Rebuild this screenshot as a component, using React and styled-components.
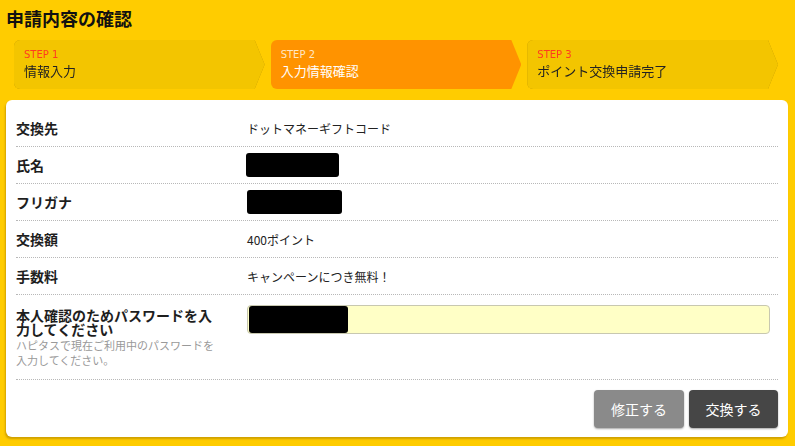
import React from "react";
import styled, { createGlobalStyle } from "styled-components";

const Global = createGlobalStyle`
  html, body { margin: 0; padding: 0; background: #ffcc00; }
  body { font-family: "Noto Sans CJK JP", "Noto Sans", sans-serif; color: #222; }
`;

const Page = styled.div`
  width: 795px;
  height: 446px;
  background: #ffcc00;
  box-sizing: border-box;
  padding: 5px 7px 0 6px;
  overflow: hidden;
`;

const Title = styled.h1`
  margin: 0;
  font-size: 18px;
  font-weight: 700;
  line-height: 26px;
  color: #111;
`;

const Steps = styled.div`
  display: grid;
  grid-template-columns: repeat(3, 1fr);
  column-gap: 6px;
  margin: 9px 10px 0 8px;
  height: 49px;
`;

const StepWrap = styled.div`
  filter: ${(p) => (p.$active ? "none" : "drop-shadow(0 0 0.6px rgba(120, 90, 0, 0.55))")};
`;

const Step = styled.div`
  height: 49px;
  box-sizing: border-box;
  padding: 8px 0 0 10px;
  border-radius: 6px;
  background: ${(p) => (p.$active ? "#ff9300" : "#f3c500")};
  clip-path: polygon(0 0, calc(100% - 10px) 0, 100% 50%, calc(100% - 10px) 100%, 0 100%);
  color: ${(p) => (p.$active ? "#fff" : "#222")};
`;

const StepNo = styled.div`
  font-family: "DejaVu Sans", "Noto Sans", sans-serif;
  font-size: 10px;
  line-height: 13px;
  color: ${(p) => (p.$active ? "#ffe7c4" : "#ff3b1f")};
`;

const StepName = styled.div`
  font-size: 13px;
  line-height: 19px;
`;

const Card = styled.div`
  margin-top: 11px;
  background: #fff;
  border-radius: 6px;
  box-shadow: -1px 2px 2px rgba(120, 80, 0, 0.35);
  padding: 10px 10px 9px 10px;
`;

const Row = styled.div`
  display: grid;
  grid-template-columns: 231px 1fr;
  align-items: ${(p) => (p.$top ? "start" : "center")};
  min-height: 37px;
  border-bottom: 1px dotted #b8b8b8;
  box-sizing: border-box;
  padding: ${(p) => (p.$top ? "10px 0 11px" : "0")};
`;

const Label = styled.div`
  font-size: 14px;
  font-weight: 700;
  color: #1e1e1e;
  line-height: ${(p) => (p.$tight ? "14px" : "20px")};
`;

const LabelBlock = styled.div`
  width: 203px;
  padding-top: 3px;
`;

const Hint = styled.div`
  font-size: 11px;
  line-height: 15px;
  color: #999;
  margin-top: 2px;
`;

const Value = styled.div`
  font-size: 12px;
  color: #222;
`;

const Redact = styled.div`
  width: ${(p) => p.$w}px;
  height: 24px;
  background: #000;
  border-radius: 3px;
  margin-left: ${(p) => p.$ml || 0}px;
`;

const Input = styled.div`
  height: 29px;
  box-sizing: border-box;
  border: 1px solid #c8c8b0;
  border-radius: 4px;
  background: #ffffc6;
  width: 523px;
  display: flex;
  align-items: center;
  padding-left: 1px;
`;

const PassMask = styled.div`
  width: 99px;
  height: 27px;
  background: #000;
  border-radius: 3px;
`;

const Actions = styled.div`
  display: flex;
  justify-content: flex-end;
  gap: 5px;
  padding-top: 10px;
`;

const Button = styled.button`
  width: ${(p) => p.$w}px;
  height: 38px;
  border: none;
  border-radius: 4px;
  background: ${(p) => (p.$primary ? "#464646" : "#8a8a8a")};
  color: #fff;
  font-family: "Noto Sans CJK JP", sans-serif;
  font-size: 14px;
  box-shadow: 0 1px 2px rgba(0, 0, 0, 0.35);
  padding: 0;
`;

const rows = [
  { label: "交換先", value: "ドットマネーギフトコード" },
  { label: "氏名", mask: 93, ml: -1 },
  { label: "フリガナ", mask: 95 },
  { label: "交換額", value: "400ポイント" },
  { label: "手数料", value: "キャンペーンにつき無料！" },
];

export default function App() {
  return (
    <>
      <Global />
      <Page>
        <Title>申請内容の確認</Title>
        <Steps>
          <StepWrap>
            <Step>
              <StepNo>STEP 1</StepNo>
              <StepName>情報入力</StepName>
            </Step>
          </StepWrap>
          <StepWrap $active>
            <Step $active>
              <StepNo $active>STEP 2</StepNo>
              <StepName>入力情報確認</StepName>
            </Step>
          </StepWrap>
          <StepWrap>
            <Step>
              <StepNo>STEP 3</StepNo>
              <StepName>ポイント交換申請完了</StepName>
            </Step>
          </StepWrap>
        </Steps>
        <Card>
          {rows.map((r) => (
            <Row key={r.label}>
              <Label>{r.label}</Label>
              {r.mask ? <Redact $w={r.mask} $ml={r.ml} /> : <Value>{r.value}</Value>}
            </Row>
          ))}
          <Row $top>
            <LabelBlock>
              <Label $tight>本人確認のためパスワードを入力してください</Label>
              <Hint>ハピタスで現在ご利用中のパスワードを入力してください。</Hint>
            </LabelBlock>
            <Input>
              <PassMask />
            </Input>
          </Row>
          <Actions>
            <Button $w={90}>修正する</Button>
            <Button $w={89} $primary>交換する</Button>
          </Actions>
        </Card>
      </Page>
    </>
  );
}
